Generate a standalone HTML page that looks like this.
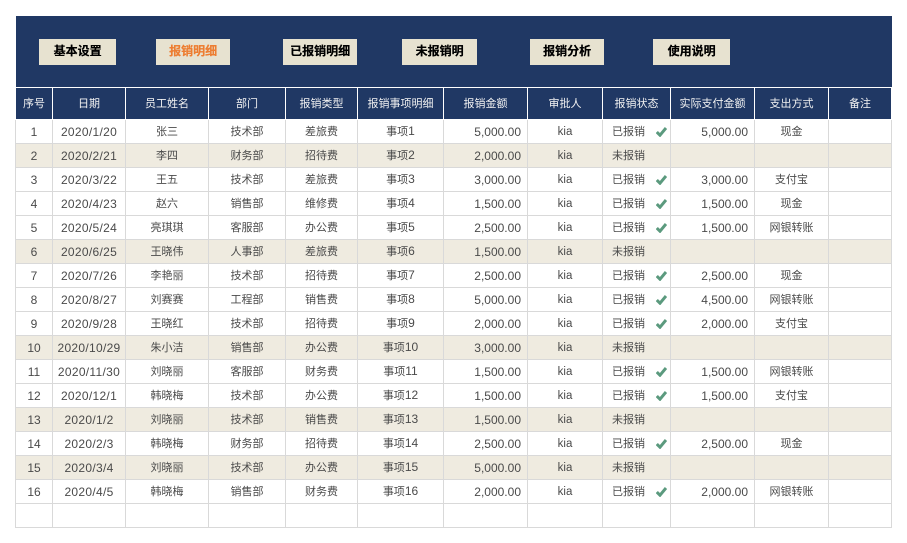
<!DOCTYPE html>
<html lang="zh"><head><meta charset="utf-8"><style>
html,body{margin:0;padding:0;background:#fff;width:907px;height:543px;overflow:hidden}
body{font-family:"Liberation Sans","Noto Sans CJK SC",sans-serif;position:relative}
.top{position:absolute;left:16px;top:16px;width:876px;height:71px;background:#203864}
.b{position:absolute;top:39px;height:26px;line-height:24px;background:#E7E2D0;text-align:center;font-size:12px;font-weight:700;color:#000;text-shadow:.3px 0 0 currentColor}
.o{color:#ED7D31}
table{position:absolute;left:15px;top:87px;border-collapse:separate;border-spacing:0;table-layout:fixed;width:877px}
th,td{box-sizing:border-box;padding:2px 0 0;overflow:hidden;white-space:nowrap;text-align:center;font-size:11px;font-weight:400;border-right:1px solid #D9D9D9;border-bottom:1px solid #D9D9D9;color:#4a4a4a;height:24px;position:relative;vertical-align:top;line-height:21px}
td:first-child,th:first-child{border-left:1px solid #D9D9D9}
th{background:#203864;color:#f2f2f2;height:33px;border-color:#fff;border-top:1px solid #fff;padding-top:1px;line-height:30px}
th:first-child{border-left-color:#fff}
tr.g td{background:#EFEBE0}
td:first-child,.d,td.m{font-size:12px}
.d{letter-spacing:.3px}
.k{font-size:11.5px}
td.m{text-align:right;padding-right:6px}
td.s{text-align:left;padding-left:9px}
.x{font-size:12px;line-height:0}
td svg{position:absolute;left:53px;top:7px}
</style></head><body>
<div class="top"></div>
<div class="b" style="left:39px;width:77px">基本设置</div>
<div class="b o" style="left:156px;width:74px">报销明细</div>
<div class="b" style="left:283px;width:74px">已报销明细</div>
<div class="b" style="left:402px;width:75px">未报销明</div>
<div class="b" style="left:530px;width:74px">报销分析</div>
<div class="b" style="left:653px;width:77px">使用说明</div>
<svg width="0" height="0" style="position:absolute"><defs><symbol id="c" viewBox="0 0 11 10"><path d="M.8 5 4 8.2 10 1" fill="none" stroke="#5B9A7E" stroke-width="3"/></symbol></defs></svg>
<table>
<colgroup><col style="width:38px"><col style="width:73px"><col style="width:83px"><col style="width:77px"><col style="width:72px"><col style="width:86px"><col style="width:84px"><col style="width:75px"><col style="width:68px"><col style="width:84px"><col style="width:74px"><col style="width:63px"></colgroup>
<tr><th>序号</th><th>日期</th><th>员工姓名</th><th>部门</th><th>报销类型</th><th>报销事项明细</th><th>报销金额</th><th>审批人</th><th>报销状态</th><th>实际支付金额</th><th>支出方式</th><th>备注</th></tr>
<tr><td>1</td><td class="d">2020/1/20</td><td>张三</td><td>技术部</td><td>差旅费</td><td>事项<span class="x">1</span></td><td class="m">5,000.00</td><td class="k">kia</td><td class="s">已报销<svg width="11" height="10"><use href="#c"/></svg></td><td class="m">5,000.00</td><td>现金</td><td></td></tr>
<tr class="g"><td>2</td><td class="d">2020/2/21</td><td>李四</td><td>财务部</td><td>招待费</td><td>事项<span class="x">2</span></td><td class="m">2,000.00</td><td class="k">kia</td><td class="s">未报销</td><td></td><td></td><td></td></tr>
<tr><td>3</td><td class="d">2020/3/22</td><td>王五</td><td>技术部</td><td>差旅费</td><td>事项<span class="x">3</span></td><td class="m">3,000.00</td><td class="k">kia</td><td class="s">已报销<svg width="11" height="10"><use href="#c"/></svg></td><td class="m">3,000.00</td><td>支付宝</td><td></td></tr>
<tr><td>4</td><td class="d">2020/4/23</td><td>赵六</td><td>销售部</td><td>维修费</td><td>事项<span class="x">4</span></td><td class="m">1,500.00</td><td class="k">kia</td><td class="s">已报销<svg width="11" height="10"><use href="#c"/></svg></td><td class="m">1,500.00</td><td>现金</td><td></td></tr>
<tr><td>5</td><td class="d">2020/5/24</td><td>亮琪琪</td><td>客服部</td><td>办公费</td><td>事项<span class="x">5</span></td><td class="m">2,500.00</td><td class="k">kia</td><td class="s">已报销<svg width="11" height="10"><use href="#c"/></svg></td><td class="m">1,500.00</td><td>网银转账</td><td></td></tr>
<tr class="g"><td>6</td><td class="d">2020/6/25</td><td>王晓伟</td><td>人事部</td><td>差旅费</td><td>事项<span class="x">6</span></td><td class="m">1,500.00</td><td class="k">kia</td><td class="s">未报销</td><td></td><td></td><td></td></tr>
<tr><td>7</td><td class="d">2020/7/26</td><td>李艳丽</td><td>技术部</td><td>招待费</td><td>事项<span class="x">7</span></td><td class="m">2,500.00</td><td class="k">kia</td><td class="s">已报销<svg width="11" height="10"><use href="#c"/></svg></td><td class="m">2,500.00</td><td>现金</td><td></td></tr>
<tr><td>8</td><td class="d">2020/8/27</td><td>刘赛赛</td><td>工程部</td><td>销售费</td><td>事项<span class="x">8</span></td><td class="m">5,000.00</td><td class="k">kia</td><td class="s">已报销<svg width="11" height="10"><use href="#c"/></svg></td><td class="m">4,500.00</td><td>网银转账</td><td></td></tr>
<tr><td>9</td><td class="d">2020/9/28</td><td>王晓红</td><td>技术部</td><td>招待费</td><td>事项<span class="x">9</span></td><td class="m">2,000.00</td><td class="k">kia</td><td class="s">已报销<svg width="11" height="10"><use href="#c"/></svg></td><td class="m">2,000.00</td><td>支付宝</td><td></td></tr>
<tr class="g"><td>10</td><td class="d">2020/10/29</td><td>朱小洁</td><td>销售部</td><td>办公费</td><td>事项<span class="x">10</span></td><td class="m">3,000.00</td><td class="k">kia</td><td class="s">未报销</td><td></td><td></td><td></td></tr>
<tr><td>11</td><td class="d">2020/11/30</td><td>刘晓丽</td><td>客服部</td><td>财务费</td><td>事项<span class="x">11</span></td><td class="m">1,500.00</td><td class="k">kia</td><td class="s">已报销<svg width="11" height="10"><use href="#c"/></svg></td><td class="m">1,500.00</td><td>网银转账</td><td></td></tr>
<tr><td>12</td><td class="d">2020/12/1</td><td>韩晓梅</td><td>技术部</td><td>办公费</td><td>事项<span class="x">12</span></td><td class="m">1,500.00</td><td class="k">kia</td><td class="s">已报销<svg width="11" height="10"><use href="#c"/></svg></td><td class="m">1,500.00</td><td>支付宝</td><td></td></tr>
<tr class="g"><td>13</td><td class="d">2020/1/2</td><td>刘晓丽</td><td>技术部</td><td>销售费</td><td>事项<span class="x">13</span></td><td class="m">1,500.00</td><td class="k">kia</td><td class="s">未报销</td><td></td><td></td><td></td></tr>
<tr><td>14</td><td class="d">2020/2/3</td><td>韩晓梅</td><td>财务部</td><td>招待费</td><td>事项<span class="x">14</span></td><td class="m">2,500.00</td><td class="k">kia</td><td class="s">已报销<svg width="11" height="10"><use href="#c"/></svg></td><td class="m">2,500.00</td><td>现金</td><td></td></tr>
<tr class="g"><td>15</td><td class="d">2020/3/4</td><td>刘晓丽</td><td>技术部</td><td>办公费</td><td>事项<span class="x">15</span></td><td class="m">5,000.00</td><td class="k">kia</td><td class="s">未报销</td><td></td><td></td><td></td></tr>
<tr><td>16</td><td class="d">2020/4/5</td><td>韩晓梅</td><td>销售部</td><td>财务费</td><td>事项<span class="x">16</span></td><td class="m">2,000.00</td><td class="k">kia</td><td class="s">已报销<svg width="11" height="10"><use href="#c"/></svg></td><td class="m">2,000.00</td><td>网银转账</td><td></td></tr>
<tr><td></td><td></td><td></td><td></td><td></td><td></td><td></td><td></td><td></td><td></td><td></td><td></td></tr>
</table>
</body></html>
